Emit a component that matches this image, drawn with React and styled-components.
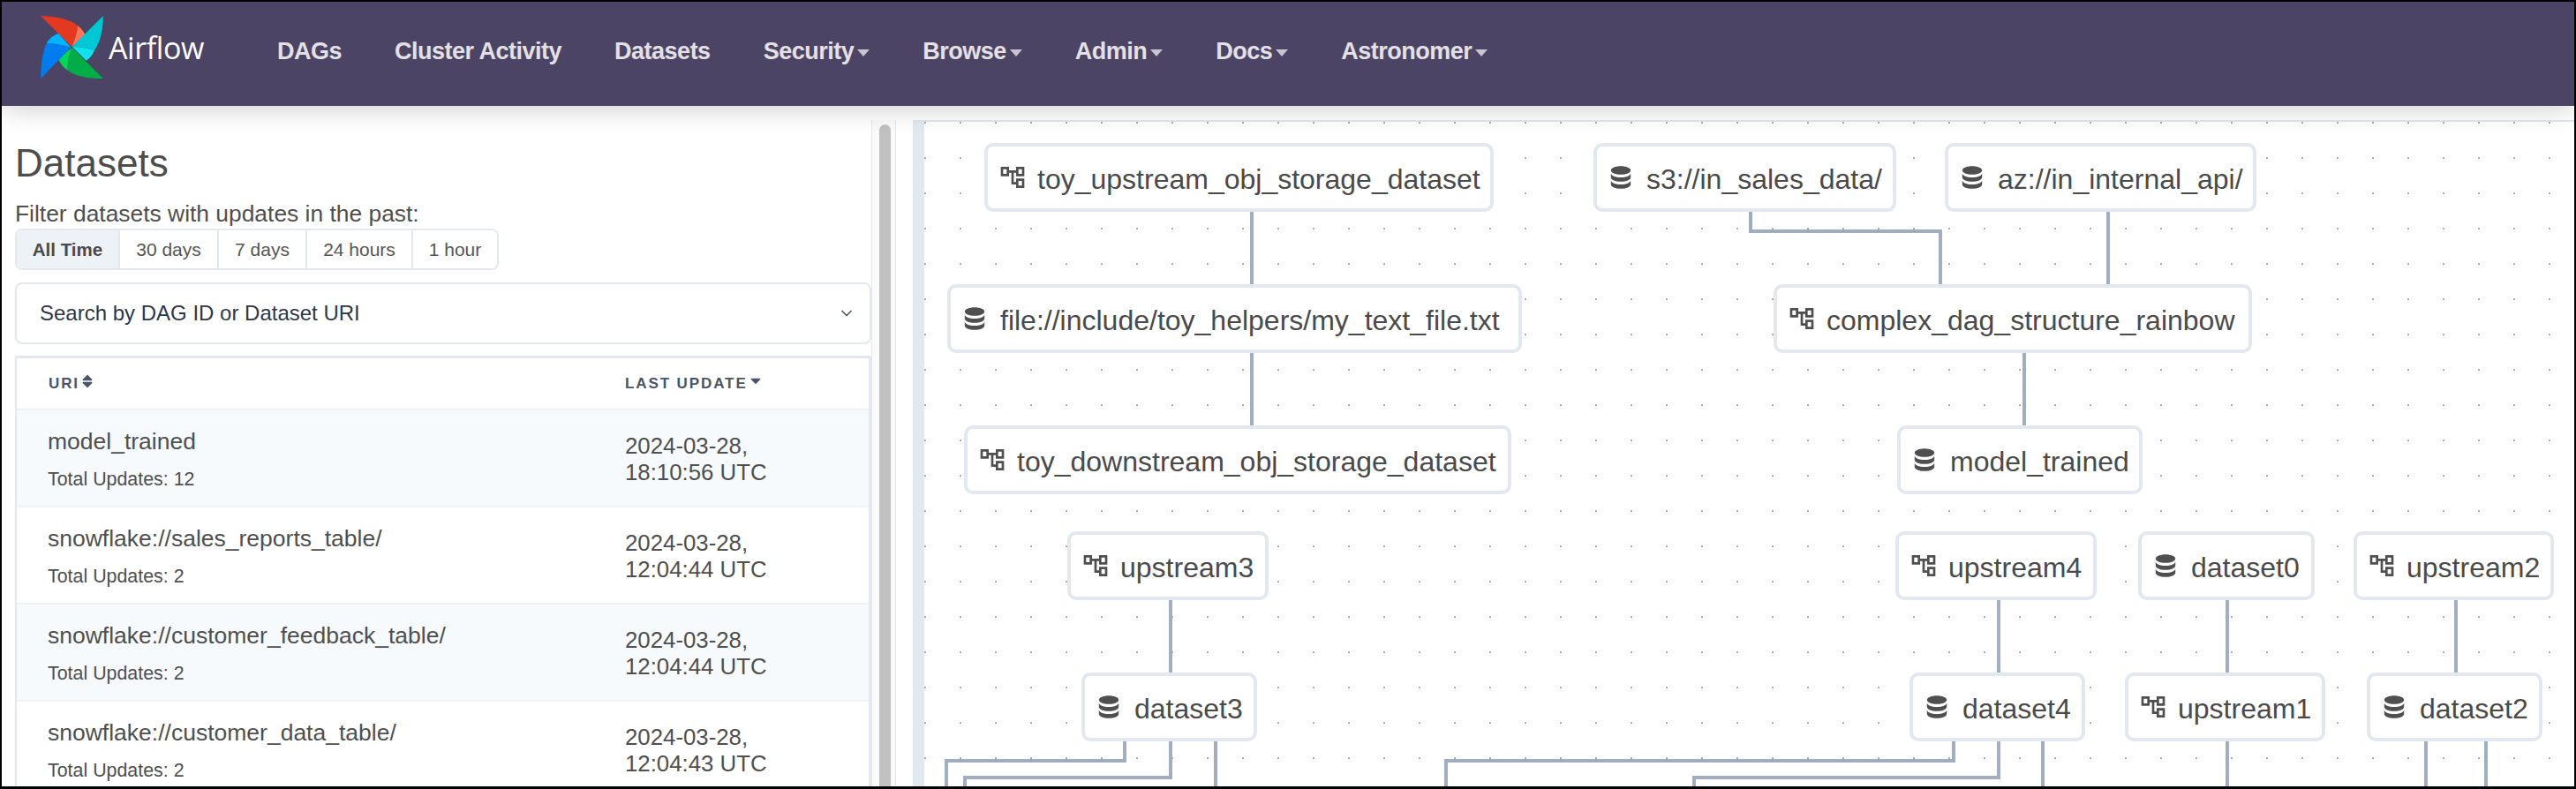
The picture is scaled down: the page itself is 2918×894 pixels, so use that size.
import React from 'react';
import styled, { createGlobalStyle } from 'styled-components';
import { HiDatabase } from 'react-icons/hi';
import { MdOutlineAccountTree } from 'react-icons/md';
import { TiArrowSortedDown, TiArrowUnsorted } from 'react-icons/ti';
import { FiChevronDown } from 'react-icons/fi';

const GlobalStyle = createGlobalStyle`
  html, body {
    margin: 0;
    padding: 0;
    background: #000;
  }
  * {
    box-sizing: border-box;
  }
`;

const Frame = styled.div`
  width: 2918px;
  height: 894px;
  padding: 2px 2px 3px 2px;
  background: #000;
  overflow: hidden;
  font-family: "Liberation Sans", Arial, sans-serif;
`;

const Page = styled.div`
  height: 100%;
  display: flex;
  flex-direction: column;
  background: #fff;
  overflow: hidden;
`;

const Navbar = styled.nav`
  position: relative;
  z-index: 2;
  flex: 0 0 118px;
  display: flex;
  align-items: flex-start;
  background: #4b4464;
  box-shadow: 0 6px 26px rgba(0, 0, 0, 0.16);
`;

const Brand = styled.a`
  display: flex;
  align-items: center;
  margin: 16px 0 0 44px;
  width: 268px;
  height: 71px;
  color: #fff;
  font-family: "Open Sans", sans-serif;
  font-size: 34px;
  letter-spacing: -0.4px;
`;

const BrandName = styled.span`
  margin: 0 0 0 6px;
`;

const NavList = styled.div`
  display: flex;
  gap: 60px;
  margin-top: 38px;
`;

const NavLink = styled.a`
  display: flex;
  align-items: center;
  height: 36px;
  color: #e4e0e6;
  font-size: 27px;
  font-weight: 700;
  letter-spacing: -0.5px;
  white-space: nowrap;
`;

const Caret = styled.span`
  margin: 3px 0 0 4px;
  border-top: 8px solid #c9c3d2;
  border-left: 7px solid transparent;
  border-right: 7px solid transparent;
`;

const Main = styled.div`
  flex: 1;
  min-height: 0;
  display: flex;
`;

const LeftPanel = styled.div`
  flex: 0 0 985px;
  padding: 40px 0 0 15px;
  overflow: hidden;
`;

const Heading = styled.h2`
  margin: 0;
  color: #4d4d4d;
  font-size: 44px;
  font-weight: 400;
  line-height: 50px;
`;

const FilterLabel = styled.div`
  margin-top: 17px;
  color: #4f4f4f;
  font-size: 26.4px;
  line-height: 30px;
`;

const RangeGroup = styled.div`
  display: inline-flex;
  height: 47px;
  margin-top: 2px;
  border: 2px solid #e2e8f0;
  border-radius: 8px;
  overflow: hidden;
  vertical-align: top;
`;

const RangeButton = styled.div`
  width: ${(p) => p.$width}px;
  display: flex;
  align-items: center;
  justify-content: center;
  border-left: ${(p) => (p.$first ? 'none' : '2px solid #e2e8f0')};
  background: ${(p) => (p.$active ? '#edf2f7' : '#fff')};
  color: ${(p) => (p.$active ? '#4a4a4a' : '#555')};
  font-size: ${(p) => (p.$active ? 20.5 : 21)}px;
  font-weight: ${(p) => (p.$active ? 700 : 400)};
`;

const SearchBox = styled.div`
  display: flex;
  align-items: center;
  justify-content: space-between;
  height: 70px;
  margin-top: 14px;
  padding: 0 16px 0 26px;
  border: 2px solid #e2e8f0;
  border-radius: 8px;
  color: #2d3748;
  font-size: 24px;
`;

const Table = styled.div`
  margin-top: 13px;
  border: 2px solid #e2e8f0;
  border-bottom: none;
  border-right-width: 3px;
`;

const HeaderRow = styled.div`
  display: grid;
  grid-template-columns: 653px 1fr;
  height: 60px;
  padding-left: 36px;
  align-items: center;
  border-top: 1px solid #e2e8f0;
  border-bottom: 2px solid #edf2f7;
`;

const HeaderCell = styled.div`
  display: flex;
  align-items: center;
  color: #4a5568;
  font-size: 17px;
  font-weight: 700;
  letter-spacing: 1.9px;

  svg {
    margin: -6px 0 0 -1px;
  }
`;

const Row = styled.div`
  display: grid;
  grid-template-columns: 653px 1fr;
  height: 110px;
  padding-left: 35px;
  background: ${(p) => (p.$striped ? '#f7fafc' : '#fff')};
  border-bottom: 2px solid #edf2f7;
`;

const UriCell = styled.div`
  padding-top: 20px;
`;

const UriName = styled.div`
  color: #4f4f4f;
  font-size: 26.5px;
  line-height: 30px;
`;

const UpdateCount = styled.div`
  margin-top: 15px;
  color: #4f4f4f;
  font-size: 21.4px;
  line-height: 26px;
`;

const DateCell = styled.div`
  padding: 25px 0 0 1px;
  color: #4f4f4f;
  font-size: 25.8px;
  line-height: 30px;
`;

const ScrollGutter = styled.div`
  flex: 0 0 28px;
  margin-top: 16px;
  padding: 5px 5px 0 8px;
  background: #fafafa;
  border-left: 1px solid #e8e8e8;
  border-right: 1px solid #e8e8e8;
`;

const ScrollThumb = styled.div`
  height: 100%;
  background: #c1c1c1;
  border-radius: 8px 8px 0 0;
`;

const Canvas = styled.div`
  position: relative;
  flex: 1;
  margin: 16px 0 0 19px;
  border-top: 2px solid #e2e8f0;
  border-left: 13px solid #e2e8f0;
  background-color: #fff;
  background-image: radial-gradient(circle at 1px 1px, #a8a8a8 0.9px, transparent 1.1px);
  background-size: 40px 40px;
  background-position: 0 0;
  overflow: hidden;
`;

const Edges = styled.svg`
  position: absolute;
  left: 0;
  top: 0;
  width: 100%;
  height: 100%;
`;

const NodeBox = styled.div`
  position: absolute;
  left: ${(p) => p.$x}px;
  top: ${(p) => p.$y}px;
  width: ${(p) => p.$w}px;
  height: 78px;
  display: flex;
  align-items: center;
  padding: 4px 0 0 ${(p) => (p.$dag ? 12 : 11)}px;
  background: #fff;
  border: 4px solid #e2e8f0;
  border-radius: 10px;
  color: #4a4a4a;
  font-size: 32px;
  white-space: nowrap;
`;

const NodeIcon = styled.span`
  display: flex;
  align-items: center;
  justify-content: center;
  flex: 0 0 ${(p) => (p.$dag ? 32 : 30)}px;
  margin: -4px ${(p) => (p.$dag ? 12 : 13)}px 0 0;
  color: #4f4f4f;
`;

// canvas origin in page coordinates, everything below is measured from the full picture
const ORIGIN_X = 1047;
const ORIGIN_Y = 140;

const nodes = [
  { label: 'toy_upstream_obj_storage_dataset', kind: 'dag', x: 1115, y: 164, r: 1692 },
  { label: 's3://in_sales_data/', kind: 'data', x: 1805, y: 164, r: 2148 },
  { label: 'az://in_internal_api/', kind: 'data', x: 2203, y: 164, r: 2556 },
  { label: 'file://include/toy_helpers/my_text_file.txt', kind: 'data', x: 1073, y: 324, r: 1724 },
  { label: 'complex_dag_structure_rainbow', kind: 'dag', x: 2009, y: 324, r: 2551 },
  { label: 'toy_downstream_obj_storage_dataset', kind: 'dag', x: 1092, y: 484, r: 1712 },
  { label: 'model_trained', kind: 'data', x: 2149, y: 484, r: 2427 },
  { label: 'upstream3', kind: 'dag', x: 1209, y: 604, r: 1437 },
  { label: 'upstream4', kind: 'dag', x: 2147, y: 604, r: 2375 },
  { label: 'dataset0', kind: 'data', x: 2422, y: 604, r: 2622 },
  { label: 'upstream2', kind: 'dag', x: 2666, y: 604, r: 2893 },
  { label: 'dataset3', kind: 'data', x: 1225, y: 764, r: 1424 },
  { label: 'dataset4', kind: 'data', x: 2163, y: 764, r: 2362 },
  { label: 'upstream1', kind: 'dag', x: 2407, y: 764, r: 2634 },
  { label: 'dataset2', kind: 'data', x: 2681, y: 764, r: 2880 },
];

const edges = [
  [[1418, 242], [1418, 324]],
  [[1418, 402], [1418, 484]],
  [[1983, 242], [1983, 264], [2198, 264], [2198, 324]],
  [[2388, 242], [2388, 324]],
  [[2293, 402], [2293, 484]],
  [[1326, 682], [1326, 764]],
  [[2264, 682], [2264, 764]],
  [[2523, 682], [2523, 764]],
  [[2782, 682], [2782, 764]],
  [[1274, 842], [1274, 864], [1072, 864], [1072, 900]],
  [[1326, 842], [1326, 883], [1093, 883], [1093, 900]],
  [[1377, 842], [1377, 900]],
  [[2213, 842], [2213, 864], [1638, 864], [1638, 900]],
  [[2264, 842], [2264, 883], [1919, 883], [1919, 900]],
  [[2314, 842], [2314, 900]],
  [[2523, 842], [2523, 900]],
  [[2748, 842], [2748, 900]],
  [[2816, 842], [2816, 900]],
];

const rows = [
  { uri: 'model_trained', total: 12, date: '2024-03-28,', time: '18:10:56 UTC' },
  { uri: 'snowflake://sales_reports_table/', total: 2, date: '2024-03-28,', time: '12:04:44 UTC' },
  { uri: 'snowflake://customer_feedback_table/', total: 2, date: '2024-03-28,', time: '12:04:44 UTC' },
  { uri: 'snowflake://customer_data_table/', total: 2, date: '2024-03-28,', time: '12:04:43 UTC' },
];

const ranges = [
  { label: 'All Time', width: 115 },
  { label: '30 days', width: 112 },
  { label: '7 days', width: 100 },
  { label: '24 hours', width: 120 },
  { label: '1 hour', width: 97 },
];

const navItems = [
  { label: 'DAGs' },
  { label: 'Cluster Activity' },
  { label: 'Datasets' },
  { label: 'Security', caret: true },
  { label: 'Browse', caret: true },
  { label: 'Admin', caret: true },
  { label: 'Docs', caret: true },
  { label: 'Astronomer', caret: true },
];

const Pinwheel = () => (
  <svg width="71" height="71" viewBox="80 55 212 213">
    <path fill="#e43921" d="M80 55C120 55 180 65 205 88C205 110 195 140 185 160Z" />
    <path fill="#ff7557" d="M205 88C218 98 228 110 232 122L185 160C195 140 205 110 205 88Z" />
    <path fill="#00c7d4" d="M292 55C292 95 285 140 263 172C240 165 210 160 187 160Z" />
    <path fill="#11e1ee" d="M187 160C210 160 240 165 263 172C255 190 245 200 235 207Z" />
    <path fill="#00ad46" d="M292 268C250 268 205 265 172 240C170 215 175 185 187 163Z" />
    <path fill="#04d659" d="M187 163C175 185 170 215 172 240C155 230 145 215 140 200Z" />
    <path fill="#017cee" d="M80 268C80 230 85 175 100 148C125 148 160 155 183 162Z" />
    <path fill="#00b4ff" d="M183 162C160 155 125 148 100 148C110 130 125 120 140 115Z" />
  </svg>
);

const DagNode = ({ label, kind, x, y, r }) => (
  <NodeBox $x={x - ORIGIN_X} $y={y - ORIGIN_Y} $w={r - x} $dag={kind === 'dag'}>
    <NodeIcon $dag={kind === 'dag'}>
      {kind === 'dag' ? <MdOutlineAccountTree size={32} /> : <HiDatabase size={32} />}
    </NodeIcon>
    {label}
  </NodeBox>
);

const App = () => (
  <Frame>
    <GlobalStyle />
    <Page>
      <Navbar>
        <Brand>
          <Pinwheel />
          <BrandName>Airflow</BrandName>
        </Brand>
        <NavList>
          {navItems.map((item) => (
            <NavLink key={item.label}>
              {item.label}
              {item.caret && <Caret />}
            </NavLink>
          ))}
        </NavList>
      </Navbar>
      <Main>
        <LeftPanel>
          <Heading>Datasets</Heading>
          <FilterLabel>Filter datasets with updates in the past:</FilterLabel>
          <RangeGroup>
            {ranges.map((range, i) => (
              <RangeButton key={range.label} $width={range.width} $first={i === 0} $active={i === 0}>
                {range.label}
              </RangeButton>
            ))}
          </RangeGroup>
          <SearchBox>
            Search by DAG ID or Dataset URI
            <FiChevronDown size={20} color="#4a5568" />
          </SearchBox>
          <Table>
            <HeaderRow>
              <HeaderCell>URI<TiArrowUnsorted size={20} /></HeaderCell>
              <HeaderCell>LAST UPDATE<TiArrowSortedDown size={20} /></HeaderCell>
            </HeaderRow>
            {rows.map((row, i) => (
              <Row key={row.uri} $striped={i % 2 === 0}>
                <UriCell>
                  <UriName>{row.uri}</UriName>
                  <UpdateCount>Total Updates: {row.total}</UpdateCount>
                </UriCell>
                <DateCell>
                  {row.date}
                  <br />
                  {row.time}
                </DateCell>
              </Row>
            ))}
          </Table>
        </LeftPanel>
        <ScrollGutter>
          <ScrollThumb />
        </ScrollGutter>
        <Canvas>
          <Edges>
            {edges.map((points, i) => (
              <polyline
                key={i}
                points={points.map(([x, y]) => `${x - ORIGIN_X},${y - ORIGIN_Y}`).join(' ')}
                fill="none"
                stroke="#a0aec0"
                strokeWidth="4"
              />
            ))}
          </Edges>
          {nodes.map((node) => (
            <DagNode key={node.label} {...node} />
          ))}
        </Canvas>
      </Main>
    </Page>
  </Frame>
);

export default App;
